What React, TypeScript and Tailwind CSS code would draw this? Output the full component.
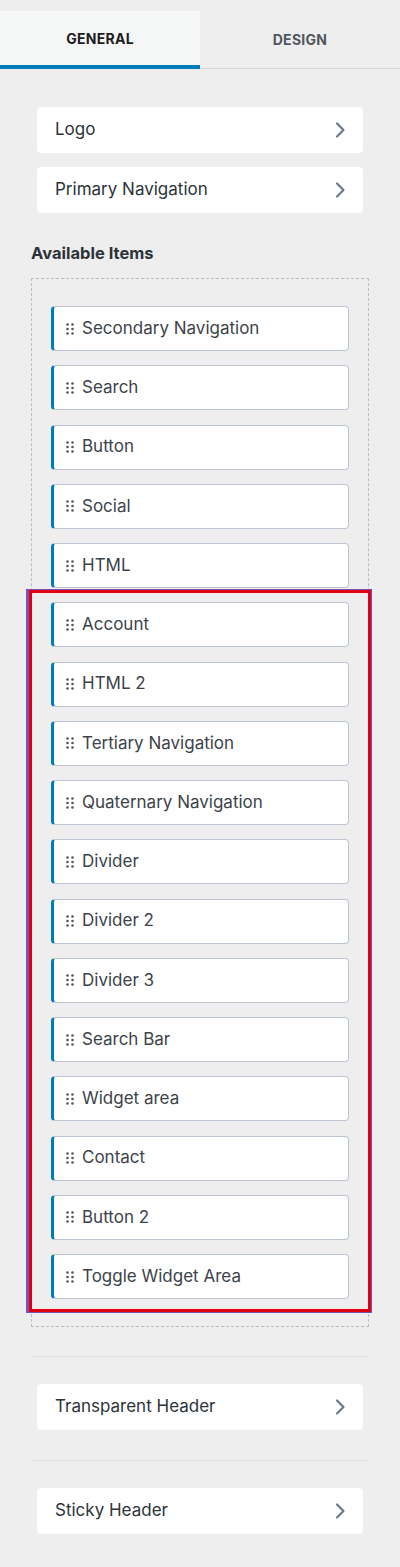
import React from 'react';

const available = [
  'Secondary Navigation',
  'Search',
  'Button',
  'Social',
  'HTML',
  'Account',
  'HTML 2',
  'Tertiary Navigation',
  'Quaternary Navigation',
  'Divider',
  'Divider 2',
  'Divider 3',
  'Search Bar',
  'Widget area',
  'Contact',
  'Button 2',
  'Toggle Widget Area',
];

function Chevron() {
  return (
    <svg width="12" height="18" viewBox="0 0 12 18" fill="none">
      <path d="M3 2.5 L9.5 9 L3 15.5" stroke="#6c7a8f" strokeWidth="2.2" strokeLinecap="round" strokeLinejoin="round" />
    </svg>
  );
}

function Handle() {
  return (
    <svg width="8" height="12" viewBox="0 0 8 12" className="shrink-0">
      {[1.5, 6, 10.5].map((y) =>
        [1.5, 6.5].map((x) => <circle key={`${x}-${y}`} cx={x} cy={y} r="1.3" fill="#50575e" />)
      )}
    </svg>
  );
}

function PanelButton({ label }: { label: string }) {
  return (
    <div className="mx-[6px] h-[46px] bg-white rounded-[4px] flex items-center justify-between pl-[18px] pr-[17px] text-[17px] text-[#2c3338]">
      <span>{label}</span>
      <Chevron />
    </div>
  );
}

function ItemRow({ label }: { label: string }) {
  return (
    <div className="h-[45px] bg-white rounded-[4px] border border-[#bcc6d2] border-l-[3px] border-l-[#007cba] flex items-center gap-[8px] pl-[12px] text-[17px] text-[#3c434a]">
      <Handle />
      <span>{label}</span>
    </div>
  );
}

export default function App() {
  return (
    <div
      className="w-[400px] h-[1567px] bg-[#eeeeee] pt-[11px]"
      style={{ fontFamily: 'Inter, "Noto Sans", sans-serif' }}
    >
      <div className="flex h-[58px] border-b border-[#d6d8de]">
        <div className="w-[200px] bg-[#f5f6f6] flex items-center justify-center text-[14px] font-bold tracking-[0.02em] text-[#1e1e1e] border-b-[4px] border-[#007cba] -mb-px">
          GENERAL
        </div>
        <div className="flex-1 flex items-center justify-center text-[14px] font-bold tracking-[0.02em] text-[#50575e]">
          DESIGN
        </div>
      </div>

      <div className="px-[31px]">
        <div className="pt-[38px] flex flex-col gap-[14px]">
          <PanelButton label="Logo" />
          <PanelButton label="Primary Navigation" />
        </div>

        <div className="mt-[30px] text-[16.5px] font-bold text-[#2c3338] h-[20px] leading-[20px]">
          Available Items
        </div>

        <div className="relative mt-[15px] border border-dashed border-[#b3bdcb] px-[19px] pt-[27px] pb-[27px] flex flex-col gap-[14.25px]">
          {available.map((label) => (
            <ItemRow key={label} label={label} />
          ))}
          <div className="absolute left-[-6px] right-[-4px] top-[310px] bottom-[13px] border border-[#7b4fb8] border-l-[3px] pointer-events-none">
            <div className="w-full h-full border-[3px] border-[#e1000f]" />
          </div>
        </div>

        <div className="mt-[29px] border-t border-[#dcdde3]" />
        <div className="mt-[27px]">
          <PanelButton label="Transparent Header" />
        </div>
        <div className="mt-[30px] border-t border-[#dcdde3]" />
        <div className="mt-[27px]">
          <PanelButton label="Sticky Header" />
        </div>
      </div>
    </div>
  );
}
